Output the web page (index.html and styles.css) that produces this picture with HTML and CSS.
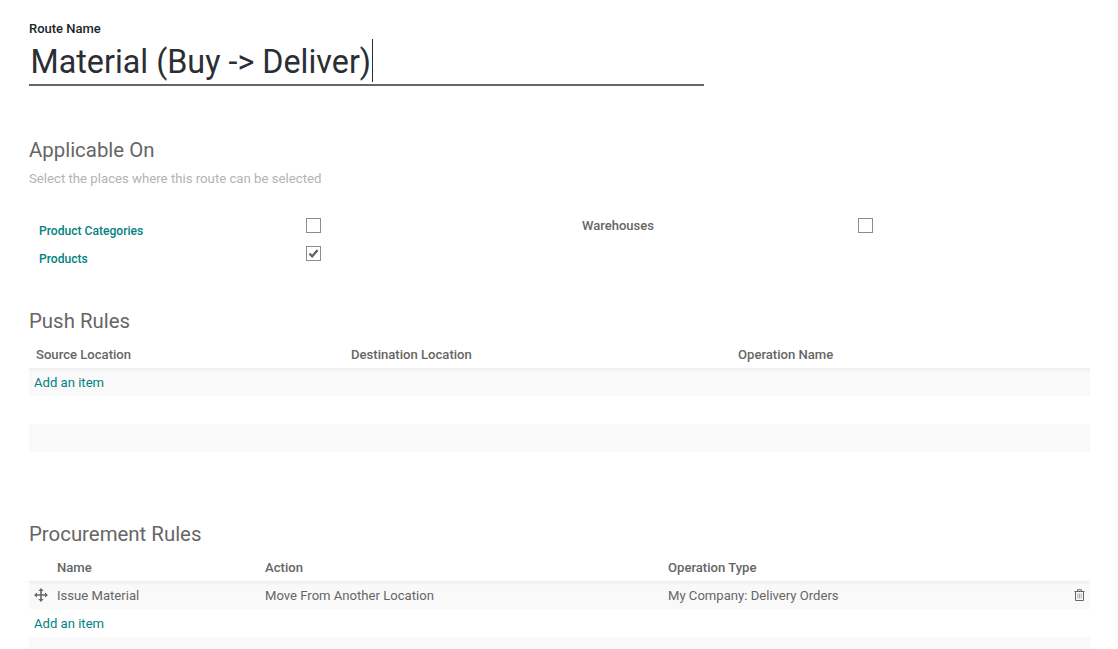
FILE: index.html
```html
<!DOCTYPE html>
<html lang="en">
<head>
<meta charset="utf-8">
<title>Route</title>
<link rel="stylesheet" href="styles.css">
</head>
<body>
<main class="form">
  <div class="title-block">
    <div class="route-label">Route Name</div>
    <div class="route-name"><span class="route-text">Material (Buy -&gt; Deliver)</span><span class="caret"></span></div>
  </div>

  <section class="applicable">
    <h2 class="section-title">Applicable On</h2>
    <p class="hint">Select the places where this route can be selected</p>
    <div class="options">
      <div class="opt-label link-label">Product Categories</div>
      <div class="opt-box"><span class="check"></span></div>
      <div class="opt-label2">Warehouses</div>
      <div class="opt-box"><span class="check"></span></div>
      <div class="opt-label link-label">Products</div>
      <div class="opt-box"><span class="check checked"><svg viewBox="0 0 15 15" width="13" height="13"><path d="M2.800 7.600 L6 10.800 L12.200 3.600" fill="none" stroke="#666" stroke-width="2.700"/></svg></span></div>
    </div>
  </section>

  <section class="push">
    <h2 class="section-title">Push Rules</h2>
    <table class="rules">
      <colgroup><col class="p1"><col class="p2"><col></colgroup>
      <thead><tr><th>Source Location</th><th>Destination Location</th><th>Operation Name</th></tr></thead>
      <tbody>
        <tr class="gray"><td colspan="3" class="add"><a>Add an item</a></td></tr>
        <tr><td colspan="3"></td></tr>
        <tr class="gray"><td colspan="3"></td></tr>
      </tbody>
    </table>
  </section>

  <section class="procurement">
    <h2 class="section-title">Procurement Rules</h2>
    <table class="rules">
      <colgroup><col class="q0"><col class="q1"><col class="q2"><col><col class="q4"></colgroup>
      <thead><tr><th></th><th>Name</th><th>Action</th><th>Operation Type</th><th></th></tr></thead>
      <tbody>
        <tr class="gray">
          <td class="handle"><svg viewBox="0 0 14 14" width="14" height="14"><path d="M7 2v10M2 7h10" stroke="#666" stroke-width="1.6" fill="none"/><path d="M7 0l2.600 3H4.400zM7 14l2.600-3H4.400zM0 7l3-2.600v5.200zM14 7l-3-2.600v5.200z" fill="#666"/></svg></td>
          <td>Issue Material</td>
          <td>Move From Another Location</td>
          <td>My Company: Delivery Orders</td>
          <td class="trash"><svg viewBox="0 0 11 12" width="11" height="12"><path d="M1.500 3v8.500h8V3M.5 2.500h10M3.500 2.500V.8h4v1.700" fill="none" stroke="#666" stroke-width="1"/><path d="M3.800 4.500v5M5.500 4.500v5M7.200 4.500v5" stroke="#aaa" stroke-width="1"/></svg></td>
        </tr>
        <tr><td colspan="5" class="add"><a>Add an item</a></td></tr>
        <tr class="gray"><td colspan="5"></td></tr>
      </tbody>
    </table>
  </section>
</main>
</body>
</html>
```
FILE: styles.css
```css
html, body {
  margin: 0;
  height: 649px;
  overflow: hidden;
  background: #fff;
}
body {
  font-family: Roboto, "Liberation Sans", sans-serif;
  font-size: 13px;
  color: #4c4c4c;
}
.form {
  padding: 21px 28px 0 29px;
}
.route-label {
  margin-bottom: 1px;
  font-weight: 500;
  font-size: 13px;
  line-height: 15px;
  color: #212529;
}
.route-name {
  width: 675px;
  height: 49px;
  box-sizing: border-box;
  border-bottom: 2px solid #666;
  display: flex;
  padding-left: 1.5px;
  font-size: 32.3px;
  line-height: 50px;
  color: #2b2e33;
}
.caret {
  width: 1px;
  height: 43px;
  margin: 2px 0 0 1px;
  background: #2b2e33;
}
.section-title {
  margin: 0;
  font-size: 20.4px;
  font-weight: 400;
  line-height: 26px;
  color: #666;
}
.applicable {
  margin-top: 51px;
}
.hint {
  margin: 8px 0 0;
  font-size: 13.2px;
  line-height: 16px;
  color: #b3b3b3;
}
.options {
  display: grid;
  grid-template-columns: 267px 276px 276px 30px;
  grid-auto-rows: 28px;
  margin-top: 27px;
  padding-left: 10px;
}
.opt-box {
  padding-top: 4px;
}
.opt-label {
  font-weight: 500;
  font-size: 12.1px;
  line-height: 15px;
  padding-top: 10px;
}
.link-label { color: #00827f; }
.opt-label2 {
  font-weight: 500;
  font-size: 13px;
  line-height: 15px;
  padding-top: 4px;
  color: #666;
}
.check {
  display: flex;
  align-items: center;
  justify-content: center;
  width: 15px;
  height: 15px;
  box-sizing: border-box;
  border: 1px solid #8c8c8c;
  background: #fff;
}
.push {
  margin-top: 38px;
}
.procurement {
  margin-top: 69px;
}
.rules {
  width: 100%;
  margin-top: 6px;
  border-collapse: collapse;
  table-layout: fixed;
}
.rules th, .rules td {
  height: 28px;
  padding: 2px 7px 0;
  box-sizing: border-box;
  text-align: left;
  font-size: 13.1px;
  line-height: 16px;
  color: #666;
}
.rules th { font-weight: 500; }
.gray td { background: #f9f9f9; }
.rules tbody tr:first-child td {
  background: linear-gradient(#eeeeee, #f9f9f9 4px);
}
.rules .add { padding-left: 5px; }
.add a { color: #00827f; }
.p1 { width: 315px; }
.p2 { width: 387px; }
.q0 { width: 21px; }
.q1 { width: 208px; }
.q2 { width: 403px; }
.q4 { width: 30px; }
.rules .handle { padding: 0 0 0 5px; }
.handle svg, .trash svg { display: block; }
.rules .trash { padding: 0 0 0 14px; }
```
